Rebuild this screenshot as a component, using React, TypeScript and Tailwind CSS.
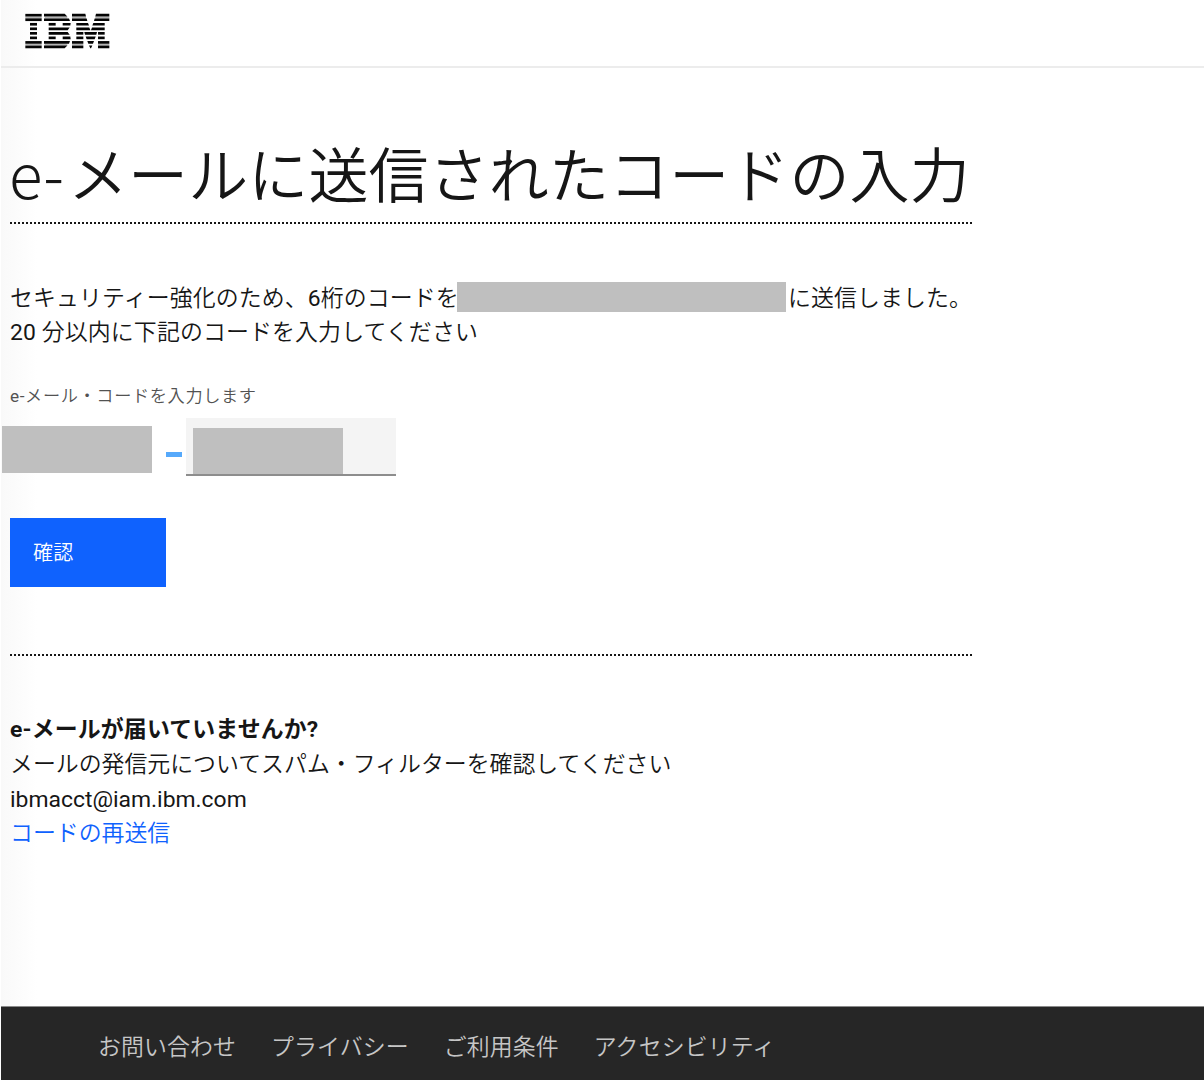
import type { ReactNode } from "react";

/* Bars of the eight-stripe logo: [row, top left, top right, bottom left, bottom right] */
const bars: [number, number, number, number, number][] = [
  [0, 76, 125, 76, 125], [1, 76, 125, 76, 125],
  [2, 90, 111, 90, 111], [3, 90, 111, 90, 111],
  [4, 90, 111, 90, 111], [5, 90, 111, 90, 111],
  [6, 76, 125, 76, 125], [7, 76, 125, 76, 125],
  [0, 132, 194, 132, 202], [1, 132, 207, 132, 210],
  [2, 146, 167, 146, 167], [2, 188, 212, 188, 211],
  [3, 146, 209, 146, 203], [4, 146, 203, 146, 209],
  [5, 146, 167, 146, 167], [5, 188, 211, 188, 212],
  [6, 132, 210, 132, 207], [7, 132, 202, 132, 194],
  [0, 216, 256, 216, 258], [1, 216, 260, 216, 262],
  [2, 229, 264, 229, 267], [3, 229, 268, 229, 271],
  [0, 288, 328, 286, 328], [1, 284, 328, 282, 328],
  [2, 280, 314, 277, 314], [3, 276, 314, 273, 314],
  [4, 229, 250, 229, 250], [4, 253, 291, 255, 289], [4, 294, 314, 294, 314],
  [5, 229, 250, 229, 250], [5, 257, 287, 260, 284], [5, 294, 314, 294, 314],
  [6, 216, 250, 216, 250], [6, 262, 282, 265, 279], [6, 294, 328, 294, 328],
  [7, 216, 250, 216, 250], [7, 267, 277, 271, 273], [7, 294, 328, 294, 328],
];

const softBars: [number, number, number][] = [
  [50, 76, 125], [50, 134, 202], [50, 216, 258], [50, 286, 328],
  [131, 76, 125], [131, 134, 202], [131, 216, 250], [131, 294, 328],
];

function Logo() {
  return (
    <svg width="86" height="36" viewBox="75 39 258 108" aria-label="IBM" fill="#050505">
      {softBars.map(([y, a, b], i) => (
        <rect key={i} x={a} y={y} width={b - a} height="6" fill="#b4b4b4" />
      ))}
      {bars.map(([row, a, b, c, d], i) => {
        const y = 41.6 + row * 13.6;
        return <polygon key={i} points={`${a},${y} ${b},${y} ${d},${y + 8} ${c},${y + 8}`} />;
      })}
    </svg>
  );
}

function DottedRule() {
  return <hr className="h-0 w-[962px] border-0 border-t-2 border-dotted border-[#161616]" />;
}

function FooterLink({ children }: { children: ReactNode }) {
  return <a href="#">{children}</a>;
}

function Latin({ children }: { children: ReactNode }) {
  return <span className="font-normal">{children}</span>;
}

export default function App() {
  return (
    <div className="flex h-[1080px] w-[1204px] flex-col overflow-hidden bg-white pl-px font-['Roboto','Noto_Sans_CJK_JP',sans-serif] text-[22.9px] leading-[34.4px] font-[350] text-[#161616]">
      <div className="flex h-[1006px] shrink-0 flex-col bg-linear-to-r from-[#f9f9f9] to-white to-[36px]">
        <header className="h-[68px] shrink-0 border-b-2 border-[#ececec] pt-[13px] pl-6">
          <Logo />
        </header>
        <main className="flex flex-col items-start pl-[9px]">
          <h1 className="mt-[68px] flex h-[86px] items-center text-[60px] leading-[80px] font-[350] tracking-[0.12px] whitespace-nowrap">
            <span className="-mt-[14px] w-[58px] shrink-0 -indent-px font-['Noto_Sans_CJK_JP'] text-[62px] font-light">e-</span>
            <span className="-mt-[2px]">メールに送信されたコードの入力</span>
          </h1>
          <DottedRule />
          <div className="mt-[58px] flex h-[34px] items-center tracking-[0.12px] whitespace-nowrap">
            <span className="w-[447px] shrink-0">セキュリティー強化のため、<Latin>6</Latin>桁のコードを</span>
            <span className="-mt-1 h-[30px] w-[329px] shrink-0 bg-[#bfbfbf]" />
            <span className="ml-[2px]">に送信しました。</span>
          </div>
          <p className="tracking-[0.14px] whitespace-nowrap"><Latin>20</Latin> 分以内に下記のコードを入力してください</p>
          <label className="mt-[34px] h-[24px] text-[17.2px] leading-6 tracking-[0.62px] text-[#525252]">
            <Latin>e-</Latin>メール・コードを入力します
          </label>
          <div className="-ml-2 mt-[10px] flex h-[58px] w-[394px]">
            <div className="mt-2 h-[47px] w-[150px] bg-[#bfbfbf]" />
            <div className="mt-[34px] ml-[14px] h-[5px] w-4 bg-[#56a9fb]" />
            <div className="ml-1 w-[210px] border-b-2 border-[#8d8d8d] bg-[#f4f4f4] pt-[10px] pl-[7px]">
              <div className="h-[46px] w-[150px] bg-[#bfbfbf]" />
            </div>
          </div>
          <button className="mt-[42px] mb-[67px] h-[69px] w-[156px] bg-[#0f62fe] pl-[23px] text-left text-[20px] tracking-[0.23px] text-white">
            確認
          </button>
          <DottedRule />
          <section className="mt-[57px] whitespace-nowrap">
            <p className="font-bold tracking-[0.15px]">e-メールが届いていませんか?</p>
            <p>メールの発信元についてスパム・フィルターを確認してください</p>
            <p className="-mb-px pt-px font-normal">ibmacct@iam.ibm.com</p>
            <a href="#" className="block text-[#0f62fe]">コードの再送信</a>
          </section>
        </main>
      </div>
      <footer className="flex h-[74px] shrink-0 items-center gap-[35px] border-t border-[#8a8a8a] bg-[#262626] pt-[9px] pl-[97px] tracking-[0.12px] whitespace-nowrap text-[#c6c6c6]">
        <FooterLink>お問い合わせ</FooterLink>
        <FooterLink>プライバシー</FooterLink>
        <FooterLink>ご利用条件</FooterLink>
        <FooterLink>アクセシビリティ</FooterLink>
      </footer>
    </div>
  );
}
